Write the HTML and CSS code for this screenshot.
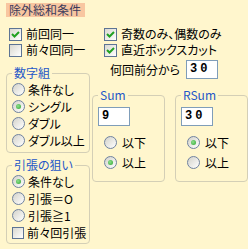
FILE: index.html
```html
<!DOCTYPE html>
<html>
  <head>
    <title>除外総和条件</title>
    <link rel="stylesheet" href="styles.css">
  </head>
  <body>
    <div class="title">除外総和条件</div>

    <div class="checks">
      <div class="item"><span class="cb on"></span>前回同一</div>
      <div class="item"><span class="cb on"></span>奇数のみ、偶数のみ</div>
      <div class="item"><span class="cb"></span>前々回同一</div>
      <div class="item"><span class="cb on"></span>直近ボックスカット</div>
    </div>

    <div class="lower">
      <div class="left">
        <fieldset class="group numbers">
          <legend>数字組</legend>
          <div class="opt"><span class="rb"></span>条件なし</div>
          <div class="opt"><span class="rb on"></span>シングル</div>
          <div class="opt"><span class="rb"></span>ダブル</div>
          <div class="opt"><span class="rb"></span>ダブル以上</div>
        </fieldset>

        <fieldset class="group pull">
          <legend>引張の狙い</legend>
          <div class="opt"><span class="rb on"></span>条件なし</div>
          <div class="opt"><span class="rb"></span>引張＝O</div>
          <div class="opt"><span class="rb"></span>引張≧1</div>
          <div class="opt"><span class="cb"></span>前々回引張</div>
        </fieldset>
      </div>

      <div class="right">
        <div class="back">
          <span>何回前分から</span>
          <span class="box">30</span>
        </div>

        <div class="sums">
          <fieldset class="group sum">
            <legend>Sum</legend>
            <div class="box">9</div>
            <div class="opt wide"><span class="rb"></span>以下</div>
            <div class="opt wide"><span class="rb on"></span>以上</div>
          </fieldset>

          <fieldset class="group sum rsum">
            <legend>RSum</legend>
            <div class="box">30</div>
            <div class="opt wide"><span class="rb on"></span>以下</div>
            <div class="opt wide"><span class="rb"></span>以上</div>
          </fieldset>
        </div>
      </div>
    </div>
  </body>
</html>
```

FILE: styles.css
```css
body {
  margin: 0;
  padding-top: 3px;
  background-color: #fff6cd;
  font-family: "Noto Sans CJK JP", "Liberation Sans", sans-serif;
  font-size: 12px;
  font-feature-settings: "palt";
  color: #000;
  overflow: hidden;
}

.title {
  width: fit-content;
  margin-left: 6px;
  padding: 0 4px 0 3px;
  height: 14px;
  line-height: 14px;
  background-color: #f8c6a0;
  color: #3c3c5c;
}

.checks {
  display: grid;
  grid-template-columns: 95px auto;
  margin: 9px 0 0 9px;
}

.item {
  display: flex;
  align-items: center;
  gap: 4px;
  height: 16px;
  line-height: 16px;
  white-space: nowrap;
}

/* xp style check box */
.cb {
  flex: none;
  box-sizing: border-box;
  width: 13px;
  height: 13px;
  border: 1px solid #5d7494;
  background: linear-gradient(135deg, #d9d8d0, #ffffff);
}

.cb.on {
  background:
    url("data:image/svg+xml;utf8,<svg xmlns='http://www.w3.org/2000/svg' width='11' height='11'><path d='M2 5 L4.5 7.5 L9 3' fill='none' stroke='%2321a121' stroke-width='2'/></svg>") no-repeat center,
    linear-gradient(135deg, #d9d8d0, #ffffff);
}

/* xp style radio button */
.rb {
  flex: none;
  position: relative;
  box-sizing: border-box;
  width: 13px;
  height: 13px;
  border: 1px solid #6f82a0;
  border-radius: 50%;
  background: linear-gradient(135deg, #d3d2ca, #ffffff);
}

.rb.on::after {
  content: "";
  position: absolute;
  left: 3px;
  top: 3px;
  width: 5px;
  height: 5px;
  border-radius: 50%;
  background: radial-gradient(circle at 40% 40%, #8ee08e, #2da52d);
}

.lower {
  display: flex;
  align-items: flex-start;
  margin-top: 2px;
}

.left {
  margin: 6px 0 0 6px;
  width: 92px;
}

.group {
  margin: 0;
  min-width: 0;
  border: 1px solid #d4cfb6;
  border-radius: 4px;
}

.group legend {
  padding: 0 2px;
  height: 14px;
  line-height: 14px;
  color: #2456c8;
}

.numbers {
  padding: 1px 0 3px 5px;
}

.pull {
  margin-top: 5px;
  padding: 1px 0 2px 5px;
}

.opt {
  display: flex;
  align-items: center;
  gap: 3px;
  height: 17px;
  white-space: nowrap;
}

.opt .cb {
  width: 12px;
  height: 12px;
}

.right {
  margin-left: 2px;
}

.back {
  display: flex;
  align-items: center;
  gap: 6px;
  margin-left: 18px;
  height: 19px;
}

.box {
  box-sizing: border-box;
  width: 32px;
  height: 19px;
  padding-left: 3px;
  border: 1px solid #7f9db9;
  background-color: #fff;
  font-family: "Liberation Mono", monospace;
  font-weight: bold;
  font-size: 12px;
  line-height: 17px;
  letter-spacing: 3px;
}

.sums {
  display: flex;
  margin-top: 9px;
}

.sum {
  width: 73px;
  flex: none;
  box-sizing: border-box;
  padding: 5px 0 9px 5px;
}

.rsum {
  margin-left: 10px;
}

.wide {
  height: 20px;
  margin-left: 6px;
  gap: 5px;
}

.sum .box + .wide {
  margin-top: 6px;
}
```
